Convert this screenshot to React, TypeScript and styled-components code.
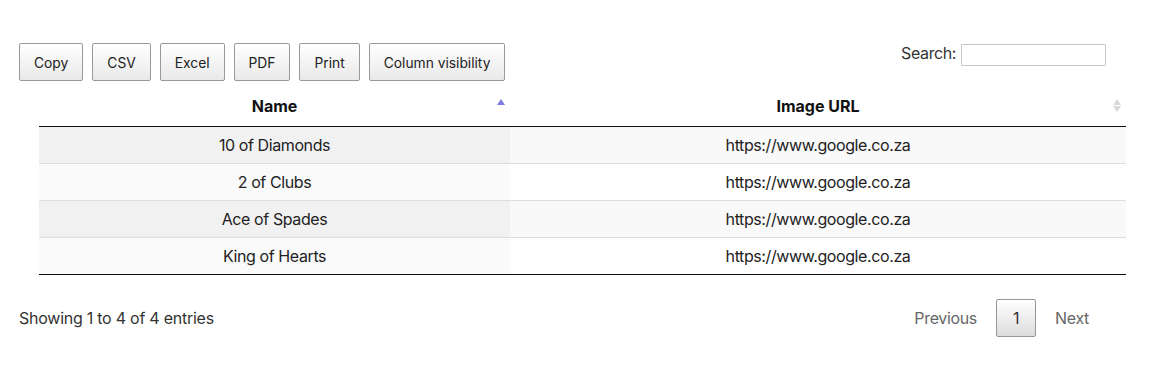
import React from "react";
import styled, { createGlobalStyle } from "styled-components";

const Global = createGlobalStyle`
  html, body { margin: 0; padding: 0; background: #fff; }
  body { font-family: Inter, "Liberation Sans", Arial, sans-serif; color: #333; font-size: 16px; }
`;

const Page = styled.div`
  width: 1087px;
  padding: 43px 0 0 19px;
`;

const TopBar = styled.div`
  display: flex;
  justify-content: space-between;
  align-items: flex-start;
`;

const ButtonGroup = styled.div`
  display: flex;
  gap: 9px;
`;

const ToolButton = styled.button`
  font-family: inherit;
  font-size: 13.8px;
  line-height: 22px;
  padding: 8px 14px 6px;
  border: 1px solid #999;
  border-radius: 2px;
  color: #222;
  background: linear-gradient(to bottom, #fff 0%, #e9e9e9 100%);
  cursor: pointer;
`;

const Filter = styled.label`
  display: flex;
  align-items: flex-start;
  gap: 5px;
  margin-top: 1px;
  font-size: 16px;
  line-height: 18px;
  letter-spacing: -0.4px;
  color: #333;
`;

const SearchInput = styled.input`
  width: 145px;
  height: 22px;
  box-sizing: border-box;
  border: 1px solid #c8c8c8;
  border-radius: 1px;
  padding: 2px 4px;
  font: inherit;
  background: #fff;
`;

const Table = styled.table`
  width: 1087px;
  margin: 5px 0 0 20px;
  border-collapse: collapse;
  table-layout: fixed;
  color: #222;
`;

const HeadCell = styled.th<{ $w: number }>`
  position: relative;
  width: ${(p) => p.$w}px;
  box-sizing: border-box;
  padding: 10px 18px;
  line-height: 20px;
  font-weight: 700;
  font-size: 16px;
  text-align: center;
  color: #111;
  border-bottom: 1px solid #111;
`;

const SortIcons = styled.span`
  position: absolute;
  right: 5px;
  top: 13px;
  display: flex;
  flex-direction: column;
  gap: 1px;
`;

const Arrow = styled.span<{ $dir: "up" | "down"; $color: string }>`
  width: 0;
  height: 0;
  border-left: 4.5px solid transparent;
  border-right: 4.5px solid transparent;
  ${(p) =>
    p.$dir === "up"
      ? `border-bottom: 6px solid ${p.$color};`
      : `border-top: 6px solid ${p.$color};`}
`;

const Row = styled.tr<{ $odd: boolean }>`
  background: ${(p) => (p.$odd ? "#f9f9f9" : "#fff")};
  &:not(:first-child) td { border-top: 1px solid #ddd; }
  &:last-child td { border-bottom: 1px solid #111; }
`;

const Cell = styled.td<{ $sorted?: boolean; $odd: boolean }>`
  padding: 8px 10px;
  line-height: 20px;
  font-size: 16px;
  letter-spacing: -0.4px;
  text-align: center;
  background: ${(p) => (p.$sorted ? (p.$odd ? "#f1f1f1" : "#fafafa") : "transparent")};
`;

const Footer = styled.div`
  display: flex;
  justify-content: space-between;
  align-items: center;
  margin-top: 24px;
`;

const Info = styled.div`
  font-size: 16px;
  letter-spacing: -0.25px;
  color: #333;
`;

const Pager = styled.div`
  display: flex;
  align-items: center;
  gap: 2px;
`;

const PageButton = styled.span<{ $current?: boolean }>`
  box-sizing: border-box;
  padding: 7px 16px;
  line-height: 22px;
  font-size: 16px;
  letter-spacing: -0.35px;
  border-radius: 2px;
  color: ${(p) => (p.$current ? "#333" : "#666")};
  border: 1px solid ${(p) => (p.$current ? "#979797" : "transparent")};
  background: ${(p) =>
    p.$current ? "linear-gradient(to bottom, #fff 0%, #dcdcdc 100%)" : "transparent"};
`;

const rows = ["10 of Diamonds", "2 of Clubs", "Ace of Spades", "King of Hearts"];

export default function App() {
  return (
    <>
      <Global />
      <Page>
        <TopBar>
          <ButtonGroup>
            {["Copy", "CSV", "Excel", "PDF", "Print", "Column visibility"].map((b) => (
              <ToolButton key={b}>{b}</ToolButton>
            ))}
          </ButtonGroup>
          <Filter>
            Search:
            <SearchInput type="search" />
          </Filter>
        </TopBar>
        <Table>
          <thead>
            <tr>
              <HeadCell $w={471}>
                Name
                <SortIcons>
                  <Arrow $dir="up" $color="#7e7ee0" />
                </SortIcons>
              </HeadCell>
              <HeadCell $w={616}>
                Image URL
                <SortIcons>
                  <Arrow $dir="up" $color="#d8d8d8" />
                  <Arrow $dir="down" $color="#d8d8d8" />
                </SortIcons>
              </HeadCell>
            </tr>
          </thead>
          <tbody>
            {rows.map((name, i) => {
              const odd = i % 2 === 0;
              return (
                <Row key={name} $odd={odd}>
                  <Cell $sorted $odd={odd}>{name}</Cell>
                  <Cell $odd={odd}>https://www.google.co.za</Cell>
                </Row>
              );
            })}
          </tbody>
        </Table>
        <Footer>
          <Info>Showing 1 to 4 of 4 entries</Info>
          <Pager>
            <PageButton>Previous</PageButton>
            <PageButton $current>1</PageButton>
            <PageButton>Next</PageButton>
          </Pager>
        </Footer>
      </Page>
    </>
  );
}
